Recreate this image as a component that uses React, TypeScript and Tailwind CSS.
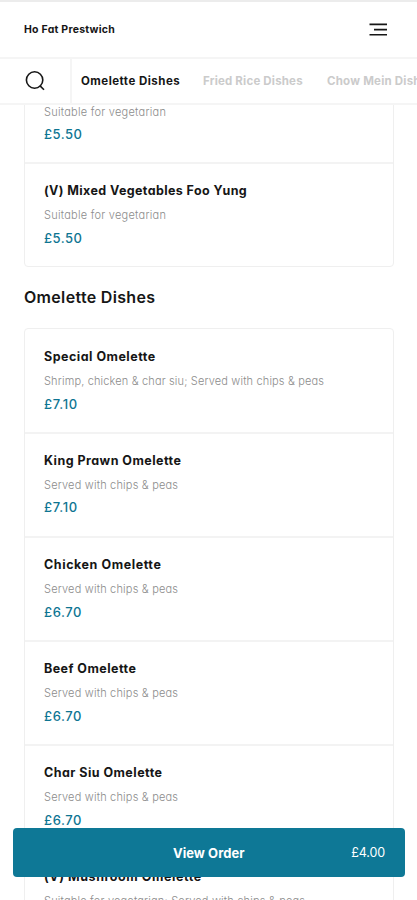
type Dish = {
  name?: string;
  note: string;
  price: string;
  nameTracking?: string;
  noteTracking: string;
  priceTracking: string;
};

const fooYung: Dish[] = [
  {
    note: "Suitable for vegetarian",
    price: "£5.50",
    noteTracking: "tracking-[0.25px]",
    priceTracking: "tracking-[0.5px]",
  },
  {
    name: "(V) Mixed Vegetables Foo Yung",
    note: "Suitable for vegetarian",
    price: "£5.50",
    nameTracking: "tracking-[0.39px]",
    noteTracking: "tracking-[0.25px]",
    priceTracking: "tracking-[0.5px]",
  },
];

const omelettes: Dish[] = [
  {
    name: "Special Omelette",
    note: "Shrimp, chicken & char siu; Served with chips & peas",
    price: "£7.10",
    nameTracking: "tracking-[0.49px]",
    noteTracking: "tracking-[0.15px]",
    priceTracking: "tracking-[0.7px]",
  },
  {
    name: "King Prawn Omelette",
    note: "Served with chips & peas",
    price: "£7.10",
    nameTracking: "tracking-[0.46px]",
    noteTracking: "tracking-[0.19px]",
    priceTracking: "tracking-[0.7px]",
  },
  {
    name: "Chicken Omelette",
    note: "Served with chips & peas",
    price: "£6.70",
    nameTracking: "tracking-[0.57px]",
    noteTracking: "tracking-[0.19px]",
    priceTracking: "tracking-[0.58px]",
  },
  {
    name: "Beef Omelette",
    note: "Served with chips & peas",
    price: "£6.70",
    nameTracking: "tracking-[0.45px]",
    noteTracking: "tracking-[0.19px]",
    priceTracking: "tracking-[0.58px]",
  },
  {
    name: "Char Siu Omelette",
    note: "Served with chips & peas",
    price: "£6.70",
    nameTracking: "tracking-[0.46px]",
    noteTracking: "tracking-[0.19px]",
    priceTracking: "tracking-[0.58px]",
  },
  {
    name: "(V) Mushroom Omelette",
    note: "Suitable for vegetarian; Served with chips & peas",
    price: "£6.70",
    nameTracking: "tracking-[0.57px]",
    noteTracking: "tracking-[0.18px]",
    priceTracking: "tracking-[0.58px]",
  },
];

function DishCard({ dishes }: { dishes: Dish[] }) {
  return (
    <ul className="mr-[23px] ml-6 rounded-[4px] border-[1.5px] border-[#efefef]">
      {dishes.map((dish) => (
        <li
          key={dish.name ?? "first"}
          className="h-[104.2px] border-t-2 border-[#f3f3f3] px-[19px] pt-[17px] whitespace-nowrap first:h-[102.2px] first:border-t-0 first:pt-[17.5px]"
        >
          <h3 className={`h-5 text-[12.5px] leading-5 font-bold text-[#161616] ${dish.nameTracking ?? ""}`}>{dish.name}</h3>
          <p className={`mt-[5px] text-[11px] leading-[19px] font-light text-[#8c8c8c] ${dish.noteTracking}`}>
            {dish.note}
          </p>
          <p className={`mt-[2.8px] text-[13px] leading-5 font-medium text-[#0e7592] ${dish.priceTracking}`}>
            {dish.price}
          </p>
        </li>
      ))}
    </ul>
  );
}

export default function App() {
  return (
    <div className="relative h-[900px] w-full overflow-hidden bg-white font-['Inter',sans-serif] [font-feature-settings:'cv11']">
      <header className="relative z-10 bg-white">
        <div className="flex h-[59px] items-center justify-between border-t-2 border-b-2 border-t-[#ececec] border-b-[#f5f5f5] pr-[30px] pl-6">
          <h1 className="text-[10.5px] leading-4 font-bold tracking-[0.25px] text-[#161616]">Ho Fat Prestwich</h1>
          <svg width="18" height="14" viewBox="0 0 18 14" fill="none" stroke="#161616" strokeWidth="1.6">
            <path d="M0.5 1.4H18M5 6.6H18M0.5 11.8H18" />
          </svg>
        </div>
        <nav className="flex h-[46px] items-stretch border-b-2 border-[#f5f5f5]">
          <div className="flex w-[72px] items-center border-r-2 border-[#f5f5f5] pl-[25px]">
            <svg width="21" height="21" viewBox="0 0 21 21" fill="none" stroke="#161616" strokeWidth="1.6">
              <circle cx="9.6" cy="9" r="8.2" />
              <path d="M14.8 14.6L19 18.8" />
            </svg>
          </div>
          <div className="flex flex-1 items-center gap-6 overflow-hidden pt-[2px] pl-[9px] text-[11.5px] font-bold whitespace-nowrap text-[#cbcbcb]">
            <span className="w-[98px] shrink-0 tracking-[0.48px] text-[#161616]">Omelette Dishes</span>
            <span className="w-[100px] shrink-0 tracking-[0.19px]">Fried Rice Dishes</span>
            <span className="shrink-0 tracking-[0.22px]">Chow Mein Dishes</span>
          </div>
        </nav>
      </header>

      <main className="-mt-[46px]">
        <DishCard dishes={fooYung} />
        <h2 className="mt-[18px] mb-[19px] ml-6 text-[16px] leading-6 font-semibold tracking-[0.32px] text-[#161616]">
          Omelette Dishes
        </h2>
        <DishCard dishes={omelettes} />
      </main>

      <button className="absolute top-[828px] right-[12px] left-[12.5px] z-20 flex h-[49px] items-center justify-center rounded-[4px] bg-[#0e7896] pt-[2px] text-[13px] text-white">
        <span className="font-bold tracking-[0.05px]">View Order</span>
        <span className="absolute right-5 text-[12.5px] font-normal tracking-[-0.1px]">£4.00</span>
      </button>
    </div>
  );
}
